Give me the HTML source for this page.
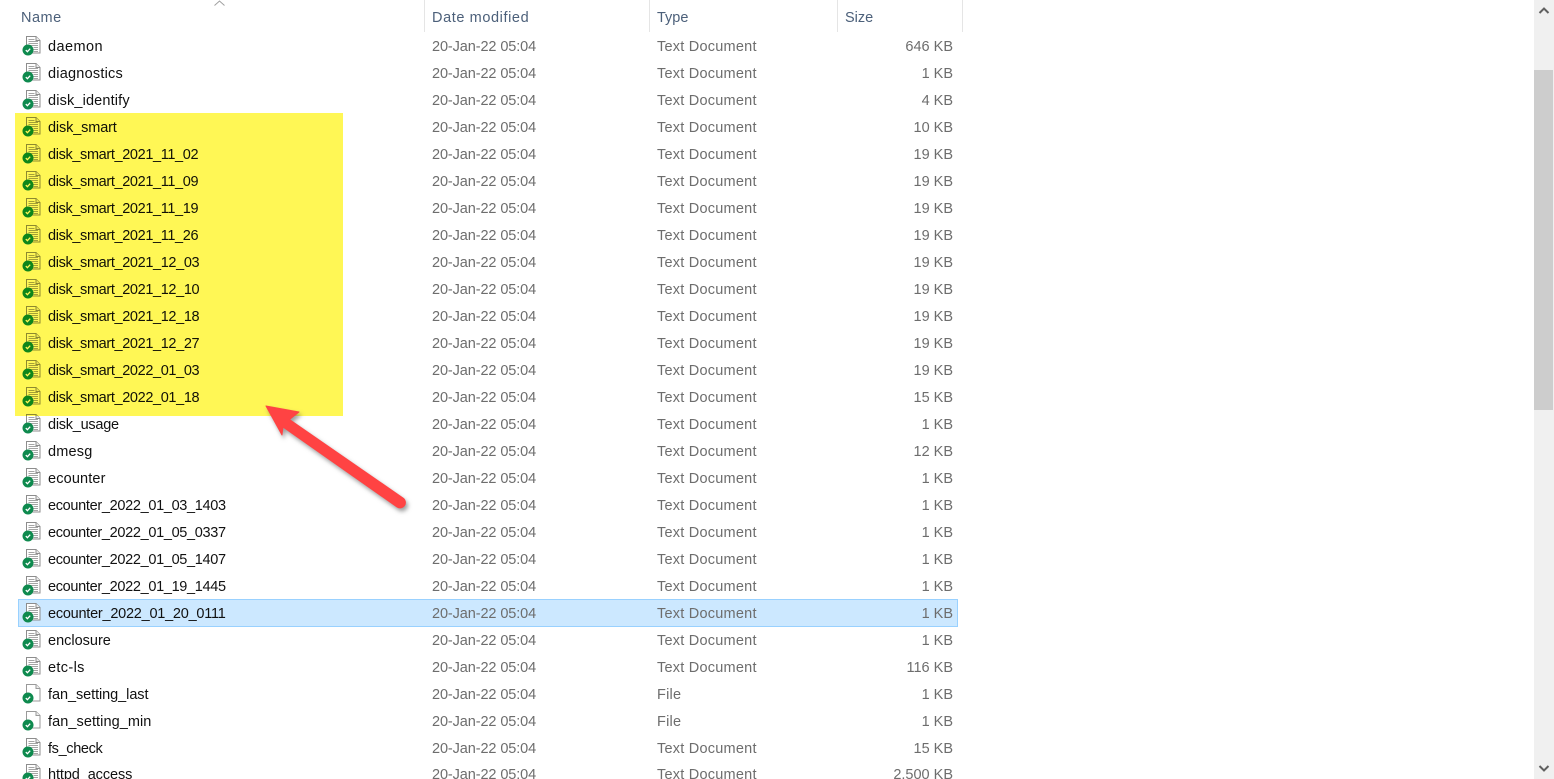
<!DOCTYPE html>
<html><head><meta charset="utf-8"><style>
html,body{margin:0;padding:0;background:#fff;width:1554px;height:779px;overflow:hidden}
body{position:relative;font-family:"Liberation Sans",sans-serif;font-size:14.5px}
.h{position:absolute;top:10px;line-height:16px;color:#4c607a}
.s{position:absolute;top:0;width:1px;height:32px;background:#e5e5e5}
.r{position:absolute;left:0;width:965px;height:27px;line-height:29px}
.r span{position:absolute;top:0;white-space:nowrap}
.n{left:48px;color:#111}
.a{letter-spacing:-.36px}
.e{letter-spacing:-.32px}
.d{left:432px;color:#6d6d6d;letter-spacing:-.1px}
.t{left:657px;color:#6d6d6d;letter-spacing:.23px}
.z{right:12px;color:#6d6d6d}
.r svg{position:absolute;left:22px;top:2px;width:20px;height:22px}
.sel{position:absolute;left:18px;top:599px;width:938px;height:26px;background:#cce8ff;border:1px solid #99d1ff}
.hl{position:absolute;left:15px;top:113px;width:328px;height:303px;background:#fff755;mix-blend-mode:multiply}
</style></head><body>
<svg width="0" height="0" style="position:absolute"><defs>
<symbol id="b" viewBox="0 0 20 22"><circle cx="6" cy="15" r="5.500" fill="#0e8a4e"/><path d="M3.800 15.100l1.600 1.600 2.800-3" fill="none" stroke="#fff" stroke-width="1.300"/></symbol>
<symbol id="f" viewBox="0 0 20 22"><path d="M4.500 1.500h9.500l4 4v12.500H4.500z" fill="#fff" stroke="#8d8d8d"/><path d="M14 1.500v4h4" fill="#eee" stroke="#8d8d8d"/><path d="M6.500 4.500h6M6.500 6.500h9.500M6.500 8.500h9.500M6.500 10.500h9.500M11.500 12.500h4.500M11.500 14.500h4.500M11.500 16.500h4.500" stroke="#a5a5a5"/><use href="#b"/></symbol>
<symbol id="g" viewBox="0 0 20 22"><path d="M4.500 1.500h9.500l4 4v12.500H4.500z" fill="#fff" stroke="#9a9a9a"/><path d="M14 1.500v4h4" fill="#eee" stroke="#9a9a9a"/><use href="#b"/></symbol>
</defs></svg>

<div class="h" style="left:21px;letter-spacing:.5px">Name</div>
<svg style="position:absolute;left:213px;top:0" width="13" height="7"><path d="M1.500 5.500L6.500 1l5 4.500" fill="none" stroke="#a0a0a0"/></svg>
<div class="h" style="left:432px;letter-spacing:.6px">Date modified</div>
<div class="h" style="left:657px">Type</div>
<div class="h" style="left:845px">Size</div>
<div class="s" style="left:424px"></div><div class="s" style="left:649px"></div><div class="s" style="left:837px"></div><div class="s" style="left:962px"></div>

<div class="sel"></div>

<div class="r" style="top:33px"><svg><use href="#f"/></svg><span class="n" style="letter-spacing:.43px">daemon</span><span class="d">20-Jan-22 05:04</span><span class="t">Text Document</span><span class="z">646 KB</span></div>
<div class="r" style="top:60px"><svg><use href="#f"/></svg><span class="n" style="letter-spacing:.22px">diagnostics</span><span class="d">20-Jan-22 05:04</span><span class="t">Text Document</span><span class="z">1 KB</span></div>
<div class="r" style="top:87px"><svg><use href="#f"/></svg><span class="n" style="letter-spacing:.15px">disk_identify</span><span class="d">20-Jan-22 05:04</span><span class="t">Text Document</span><span class="z">4 KB</span></div>
<div class="r" style="top:114px"><svg><use href="#f"/></svg><span class="n" style="letter-spacing:-.14px">disk_smart</span><span class="d">20-Jan-22 05:04</span><span class="t">Text Document</span><span class="z">10 KB</span></div>
<div class="r" style="top:141px"><svg><use href="#f"/></svg><span class="n a">disk_smart_2021_11_02</span><span class="d">20-Jan-22 05:04</span><span class="t">Text Document</span><span class="z">19 KB</span></div>
<div class="r" style="top:168px"><svg><use href="#f"/></svg><span class="n a">disk_smart_2021_11_09</span><span class="d">20-Jan-22 05:04</span><span class="t">Text Document</span><span class="z">19 KB</span></div>
<div class="r" style="top:195px"><svg><use href="#f"/></svg><span class="n a">disk_smart_2021_11_19</span><span class="d">20-Jan-22 05:04</span><span class="t">Text Document</span><span class="z">19 KB</span></div>
<div class="r" style="top:222px"><svg><use href="#f"/></svg><span class="n a">disk_smart_2021_11_26</span><span class="d">20-Jan-22 05:04</span><span class="t">Text Document</span><span class="z">19 KB</span></div>
<div class="r" style="top:249px"><svg><use href="#f"/></svg><span class="n a">disk_smart_2021_12_03</span><span class="d">20-Jan-22 05:04</span><span class="t">Text Document</span><span class="z">19 KB</span></div>
<div class="r" style="top:276px"><svg><use href="#f"/></svg><span class="n a">disk_smart_2021_12_10</span><span class="d">20-Jan-22 05:04</span><span class="t">Text Document</span><span class="z">19 KB</span></div>
<div class="r" style="top:303px"><svg><use href="#f"/></svg><span class="n a">disk_smart_2021_12_18</span><span class="d">20-Jan-22 05:04</span><span class="t">Text Document</span><span class="z">19 KB</span></div>
<div class="r" style="top:330px"><svg><use href="#f"/></svg><span class="n a">disk_smart_2021_12_27</span><span class="d">20-Jan-22 05:04</span><span class="t">Text Document</span><span class="z">19 KB</span></div>
<div class="r" style="top:357px"><svg><use href="#f"/></svg><span class="n a">disk_smart_2022_01_03</span><span class="d">20-Jan-22 05:04</span><span class="t">Text Document</span><span class="z">19 KB</span></div>
<div class="r" style="top:384px"><svg><use href="#f"/></svg><span class="n a">disk_smart_2022_01_18</span><span class="d">20-Jan-22 05:04</span><span class="t">Text Document</span><span class="z">15 KB</span></div>
<div class="r" style="top:411px"><svg><use href="#f"/></svg><span class="n" style="letter-spacing:-.25px">disk_usage</span><span class="d">20-Jan-22 05:04</span><span class="t">Text Document</span><span class="z">1 KB</span></div>
<div class="r" style="top:438px"><svg><use href="#f"/></svg><span class="n" style="letter-spacing:.2px">dmesg</span><span class="d">20-Jan-22 05:04</span><span class="t">Text Document</span><span class="z">12 KB</span></div>
<div class="r" style="top:465px"><svg><use href="#f"/></svg><span class="n" style="letter-spacing:.15px">ecounter</span><span class="d">20-Jan-22 05:04</span><span class="t">Text Document</span><span class="z">1 KB</span></div>
<div class="r" style="top:492px"><svg><use href="#f"/></svg><span class="n e">ecounter_2022_01_03_1403</span><span class="d">20-Jan-22 05:04</span><span class="t">Text Document</span><span class="z">1 KB</span></div>
<div class="r" style="top:519px"><svg><use href="#f"/></svg><span class="n e">ecounter_2022_01_05_0337</span><span class="d">20-Jan-22 05:04</span><span class="t">Text Document</span><span class="z">1 KB</span></div>
<div class="r" style="top:546px"><svg><use href="#f"/></svg><span class="n e">ecounter_2022_01_05_1407</span><span class="d">20-Jan-22 05:04</span><span class="t">Text Document</span><span class="z">1 KB</span></div>
<div class="r" style="top:573px"><svg><use href="#f"/></svg><span class="n e">ecounter_2022_01_19_1445</span><span class="d">20-Jan-22 05:04</span><span class="t">Text Document</span><span class="z">1 KB</span></div>
<div class="r" style="top:600px"><svg><use href="#f"/></svg><span class="n e" style="letter-spacing:-.24px">ecounter_2022_01_20_0111</span><span class="d">20-Jan-22 05:04</span><span class="t">Text Document</span><span class="z">1 KB</span></div>
<div class="r" style="top:627px"><svg><use href="#f"/></svg><span class="n">enclosure</span><span class="d">20-Jan-22 05:04</span><span class="t">Text Document</span><span class="z">1 KB</span></div>
<div class="r" style="top:654px"><svg><use href="#f"/></svg><span class="n" style="letter-spacing:.35px">etc-ls</span><span class="d">20-Jan-22 05:04</span><span class="t">Text Document</span><span class="z">116 KB</span></div>
<div class="r" style="top:681px"><svg><use href="#g"/></svg><span class="n" style="letter-spacing:-.07px">fan_setting_last</span><span class="d">20-Jan-22 05:04</span><span class="t">File</span><span class="z">1 KB</span></div>
<div class="r" style="top:708px"><svg><use href="#g"/></svg><span class="n" style="letter-spacing:.07px">fan_setting_min</span><span class="d">20-Jan-22 05:04</span><span class="t">File</span><span class="z">1 KB</span></div>
<div class="r" style="top:735px"><svg><use href="#f"/></svg><span class="n" style="letter-spacing:-.35px">fs_check</span><span class="d">20-Jan-22 05:04</span><span class="t">Text Document</span><span class="z">15 KB</span></div>
<div class="r" style="top:761px"><svg><use href="#f"/></svg><span class="n" style="letter-spacing:-.1px">httpd_access</span><span class="d">20-Jan-22 05:04</span><span class="t">Text Document</span><span class="z">2,500 KB</span></div>

<div class="hl"></div>

<svg style="position:absolute;left:0;top:0;filter:drop-shadow(2px 3px 2px rgba(60,60,60,.5))" width="1554" height="779">
<path d="M266 406L299 412 289.500 419.500 403 498A5 5 0 0 1 397 507L283 427 282 435Z" fill="#ff4343" stroke="#ff4343" stroke-width="1" stroke-linejoin="round"/>
</svg>

<div style="position:absolute;left:1534px;top:0;width:20px;height:779px;background:#f0f0f0"></div>
<div style="position:absolute;left:1534px;top:70px;width:19px;height:340px;background:#cdcdcd"></div>
<svg style="position:absolute;left:1534px;top:0" width="20" height="779">
<path d="M5.500 13L10 8.500 14.500 13" fill="none" stroke="#606060" stroke-width="2"/>
<path d="M5.500 766L10 770.500 14.500 766" fill="none" stroke="#606060" stroke-width="2"/>
</svg>
</body></html>
